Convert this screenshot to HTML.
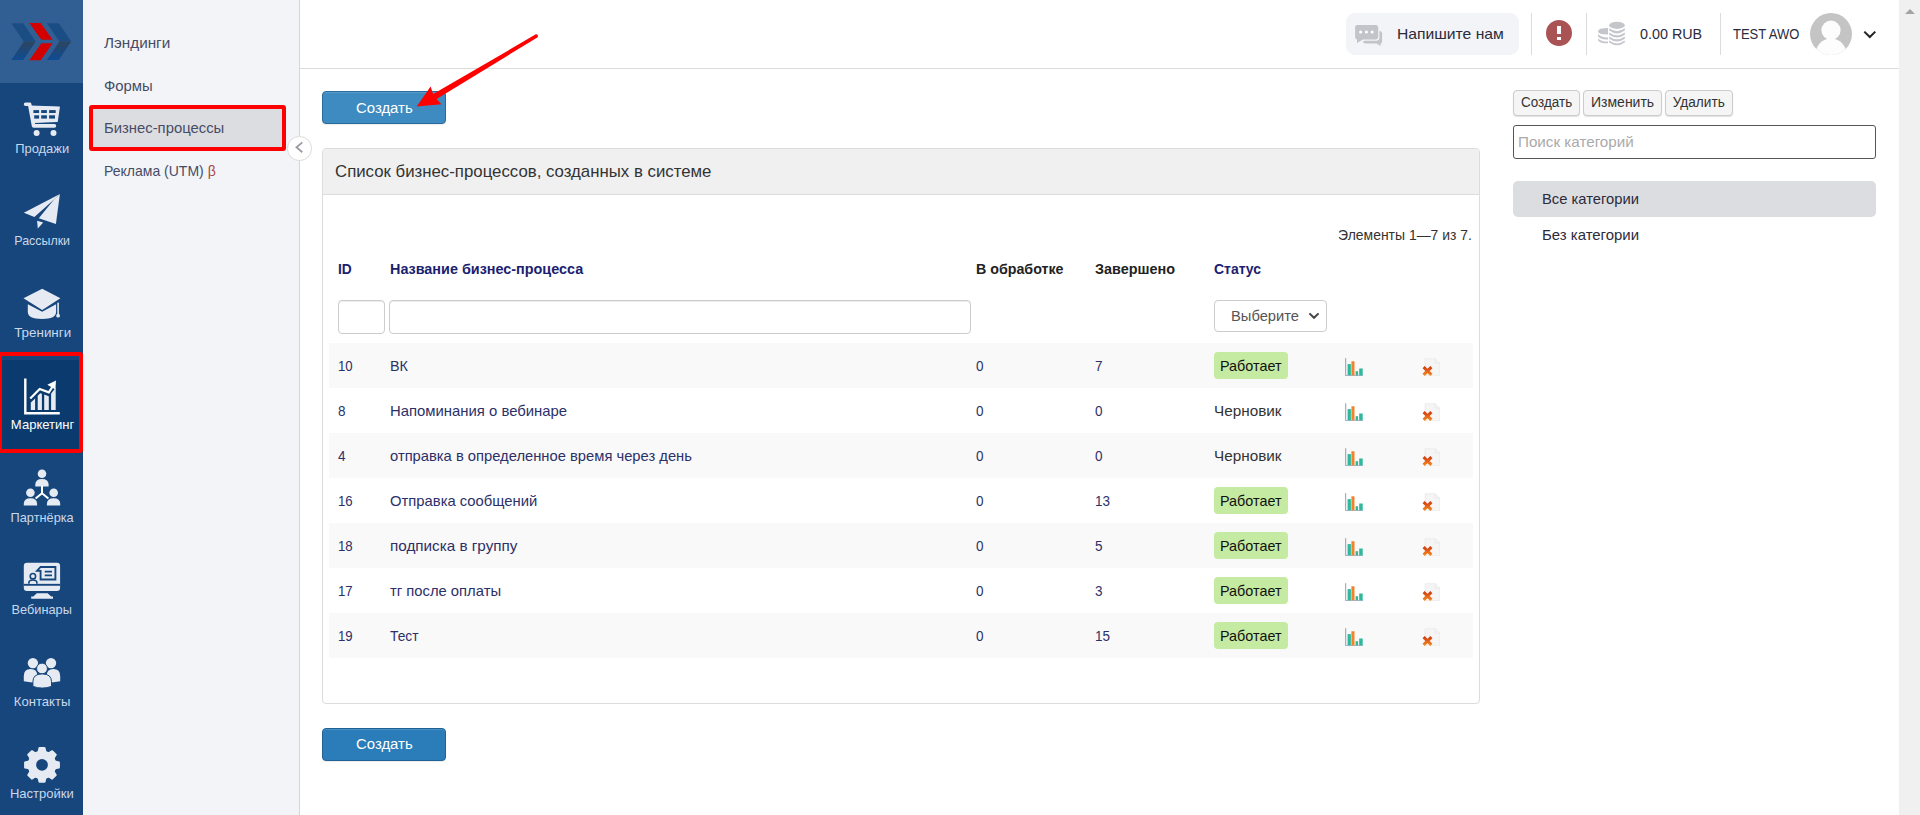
<!DOCTYPE html>
<html lang="ru">
<head>
<meta charset="utf-8">
<title>Бизнес-процессы</title>
<style>
*{box-sizing:border-box}
html,body{margin:0;padding:0}
body{width:1920px;height:815px;overflow:hidden;position:relative;background:#fff;
  font-family:"Liberation Sans",sans-serif;font-size:15px;color:#333;line-height:1}
.t{display:inline-block;white-space:nowrap;transform:scaleX(var(--s,1));transform-origin:0 50%}
.tc{transform-origin:50% 50%}
.tr{transform-origin:100% 50%}

/* ---------- left icon sidebar ---------- */
#side{position:absolute;left:0;top:0;width:83px;height:815px;background:#16467c;overflow:hidden}
#logo{position:absolute;left:0;top:0;width:83px;height:83px;background:#325f93}
#logo svg{position:absolute;left:0;top:0}
.nav{position:absolute;left:0;width:83px;height:92px;color:#c9d8ec;font-size:13px;text-align:center}
.nav svg{position:absolute;left:0;top:0;width:83px;height:92px;overflow:visible}
.nav .lb{position:absolute;left:0;right:-1.4px;top:59px;line-height:14px}
.nav.on{color:#fff}
.nav.on:before{content:"";position:absolute;left:0;right:0;top:1px;height:92px;background:#0b3a6e}

/* ---------- sub menu ---------- */
#sub{position:absolute;left:83px;top:0;width:217px;height:815px;background:#f3f4f7;border-right:1px solid #d6d6d6}
#sub a{position:absolute;left:7px;width:195px;height:44px;padding:0 0 0 13.7px;line-height:43.2px;color:#474c66;text-decoration:none;border-radius:3px}
#sub a.on{background:#dcdde1}
#sub .beta{color:#a94442}
#fold{position:absolute;left:287.3px;top:136.2px;width:24.4px;height:24.4px;border-radius:50%;background:#fff;border:1px solid #dcdcdc}

/* ---------- header ---------- */
#head{position:absolute;left:300px;top:0;width:1599px;height:69px;border-bottom:1px solid #dcdcdc;background:#fff}
#head .sep{position:absolute;top:13px;width:1px;height:42px;background:#dcdcdc}
#write{position:absolute;left:1046px;top:13px;width:173px;height:42px;border-radius:9px;background:#f3f4f7;color:#2b2b3b}
#head .txt{position:absolute;top:25.6px;line-height:16px;color:#2b2b3b}

/* ---------- scrollbar ---------- */
#sb{position:absolute;left:1899px;top:0;width:21px;height:815px;background:#f0f0f0}
#sb:before{content:"";position:absolute;left:5.7px;top:9px;border:5px solid transparent;border-top:0;border-bottom:5px solid #a3a3a3}

/* ---------- content ---------- */
.btnp{position:absolute;left:322px;width:124px;height:33px;border-radius:4px;color:#fff;font-size:15.45px;text-align:center;line-height:30px;border:1px solid #2b6a9c;background:#3d8bc1;box-shadow:inset 0 1px 0 rgba(255,255,255,.15),0 1px 1px rgba(0,0,0,.075)}
#panel{position:absolute;left:322px;top:148px;width:1158px;height:556px;border:1px solid #dcdcdc;border-radius:4px;background:#fff}
#ph{height:46px;background:#f0f0f0;border-bottom:1px solid #dcdcdc;border-radius:3px 3px 0 0;font-size:17px;color:#333;padding:13px 0 0 11.5px;line-height:20px}

/* header bits */
#head svg{position:absolute;overflow:visible}
#alert{position:absolute;left:1245.9px;top:19.7px;width:26.2px;height:26.2px;border-radius:50%;background:#a95355}
#alert:before{content:"";position:absolute;left:11.2px;top:6.2px;width:3.8px;height:8.5px;background:#fff}
#alert:after{content:"";position:absolute;left:11.2px;top:17.1px;width:3.8px;height:3.2px;background:#fff}

/* table */
#sum{position:absolute;right:7px;top:72px;line-height:27px;color:#333}
#grid{position:absolute;left:6px;top:97px;width:1144px;border-collapse:collapse;table-layout:fixed;line-height:27px}
#grid th{height:45px;padding:9px 0 9px 9.2px;text-align:left;font-weight:700;color:#222;white-space:nowrap;overflow:visible}
#grid th.l{color:#1a2170}
#grid td{height:45px;padding:9px 0 9px 9.2px;color:#2c3068;white-space:nowrap;overflow:visible;vertical-align:top}
#grid tr.f td{height:52px;padding:0;position:relative}
#grid tr.o td{background:#f9f9f9}
#grid td.st{color:#333}
.inp{position:absolute;top:9px;height:34px;border:1px solid #ccc;border-radius:4px;background:#fff;box-shadow:inset 0 1px 1px rgba(0,0,0,.075)}
.sel{position:absolute;left:9px;top:9px;width:113px;height:32px;border:1px solid #ccc;border-radius:4px;background:#fff;color:#555;line-height:30px;padding-left:16px}
.bdg{display:inline-block;width:73.5px;height:26.6px;line-height:28px;margin:0 0 0 -.2px;padding:0 0 0 6px;background:#c5eaa2;color:#111;border-radius:4px;vertical-align:top}
.ic{display:block;width:18.4px;height:18.4px;margin:5.5px 0 0 .7px}

/* right column */
.bs{position:absolute;top:90px;height:26px;border:1px solid #ccc;border-radius:4px;background:#f5f5f5;color:#333;font-size:14px;line-height:23px;text-align:center;box-shadow:0 1px 1px rgba(0,0,0,.12)}
#q{position:absolute;left:1513px;top:125px;width:363px;height:34px;border:1px solid #555;border-radius:3px;background:#fff;color:#aaa;line-height:32px;padding-left:4px}
.cat{position:absolute;left:1513px;width:363px;height:36px;border-radius:5px;line-height:35px;padding-left:29px;color:#2b2b3b}
.cat.on{background:#dcdde1}

/* annotations */
.redbox{position:absolute;border:4px solid #f00;border-radius:3px}
#arrow{position:absolute;left:0;top:0;pointer-events:none}
</style>
</head>
<body>

<div id="side">
  <div id="logo">
    <svg width="83" height="83" viewBox="0 0 83 83">
      <defs>
        <linearGradient id="lg" x1="0" y1="0" x2="0" y2="1"><stop offset="0" stop-color="#2c4560"/><stop offset="1" stop-color="#0f4c93"/></linearGradient>
      </defs>
      <polygon points="11.3,23.2 23.2,23.2 35.7,41.5 23.8,41.5" fill="#1b4d85"/>
      <polygon points="23.8,41.5 35.7,41.5 23.2,60.1 11.3,60.1" fill="url(#lg)"/>
      <polygon points="46.9,23.2 58.8,23.2 71.3,41.5 59.4,41.5" fill="#1b4d85"/>
      <polygon points="59.4,41.5 71.3,41.5 58.8,60.1 46.9,60.1" fill="url(#lg)"/>
      <polygon points="29.4,22.9 40.7,22.9 52.6,39.8 41.3,39.8" fill="#d40000"/>
      <polygon points="41.3,43.2 52.6,43.2 40.7,60.3 29.4,60.3" fill="#d40000"/>
    </svg>
  </div>

  <div class="nav" style="top:83px">
    <svg viewBox="0 0 83 92" style="transform:translateY(0px)">
      <path d="M25.6,21.2 H29.6 L33.6,42.9 H54.4" fill="none" stroke="#e6ebf3" stroke-width="3.6" stroke-linecap="round" stroke-linejoin="round"/>
      <polygon points="30.2,23.2 59.3,24.0 57.2,38.4 33.0,39.4" fill="#e6ebf3" stroke="#e6ebf3" stroke-width="1.2" stroke-linejoin="round"/>
      <g fill="#16467c">
        <rect x="33.4" y="27.1" width="5.7" height="2.9"/><rect x="41.2" y="27.1" width="5.7" height="2.9"/><rect x="49.1" y="27.1" width="6.6" height="2.9"/>
        <rect x="34.2" y="32.3" width="4.9" height="3.3"/><rect x="41.2" y="32.3" width="5.7" height="3.3"/><rect x="49.1" y="32.3" width="5.9" height="3.3"/>
      </g>
      <circle cx="36.6" cy="49.9" r="3" fill="#e6ebf3"/><circle cx="53.5" cy="49.9" r="3" fill="#e6ebf3"/>
    </svg>
    <div class="lb"><span class="t tc" style="--s:.995">Продажи</span></div>
  </div>

  <div class="nav" style="top:175px">
    <svg viewBox="0 0 83 92" style="transform:translateY(0.13px)" fill="#e6ebf3">
      <polygon points="23.85,37.55 59.9,18.8 53.8,24.5 34.35,41.97"/>
      <polygon points="53.8,24.5 59.9,18.8 55.9,48.8 38.8,43.1"/>
      <polygon points="37.1,45.6 43.2,47.3 37.8,53.4"/>
    </svg>
    <div class="lb"><span class="t tc" style="--s:.955">Рассылки</span></div>
  </div>

  <div class="nav" style="top:267px">
    <svg viewBox="0 0 83 92" style="transform:translateY(0.26px)" fill="#e6ebf3">
      <polygon points="42.2,21.4 60.4,31 42.2,42.7 23.5,31"/>
      <path d="M27.8,37.1 L42.2,44.6 L56.1,37 V44.5 Q56.1,51.7 42.2,51.7 Q27.8,51.7 27.8,44.5 Z"/>
      <rect x="57.3" y="35.4" width="1.6" height="12.6"/><circle cx="58.1" cy="48.4" r="1.9"/>
    </svg>
    <div class="lb"><span class="t tc" style="--s:1.03">Тренинги</span></div>
  </div>

  <div class="nav on" style="top:359px">
    <svg viewBox="0 0 83 92" style="transform:translateY(0.8px)">
      <path d="M25.3,18.6 V53.5 H59.8" fill="none" stroke="#fff" stroke-width="2.4"/>
      <g fill="#e6ebf3">
        <polygon points="30.8,42.8 35.1,38.6 35.1,50.2 30.8,50.2"/>
        <polygon points="37.7,36 40.3,33.4 41.9,34 41.9,50.2 37.7,50.2"/>
        <polygon points="44.2,34.8 48.8,36.4 48.8,50.2 44.2,50.2"/>
        <polygon points="51.1,33.6 55.7,28 55.7,50.2 51.1,50.2"/>
      </g>
      <polyline points="30.2,38.7 39.7,29.2 48.8,32.5 53.3,25.7" fill="none" stroke="#fff" stroke-width="2.2" stroke-linejoin="miter"/>
      <polygon points="56,20.6 47.3,24.9 55.4,29.8" fill="#fff"/>
    </svg>
    <div class="lb"><span class="t tc" style="--s:1.004">Маркетинг</span></div>
  </div>

  <div class="nav" style="top:452px">
    <svg viewBox="0 0 83 92" style="transform:translateY(-1.0px)" fill="#e6ebf3">
      <circle cx="42" cy="22.8" r="4.3"/><path d="M35.3,35.4 V33.6 Q35.3,28 42,28 Q48.6,28 48.6,33.6 V35.4 Z"/>
      <circle cx="30.4" cy="41.8" r="4.3"/><path d="M23.8,54.5 V52.8 Q23.8,47.2 30.4,47.2 Q37.1,47.2 37.1,52.8 V54.5 Z"/>
      <circle cx="53.7" cy="41.8" r="4.3"/><path d="M46.9,54.5 V52.8 Q46.9,47.2 53.6,47.2 Q60.2,47.2 60.2,52.8 V54.5 Z"/>
      <path d="M42,35 V42.3 M35.6,47.6 L42,42.3 L48.4,47.6" fill="none" stroke="#fff" stroke-width="2"/>
    </svg>
    <div class="lb"><span class="t tc" style="--s:.981">Партнёрка</span></div>
  </div>

  <div class="nav" style="top:544px">
    <svg viewBox="0 0 83 92" style="transform:translateY(-0.35px)">
      <rect x="23.8" y="19.1" width="36.3" height="28.2" rx="3.2" fill="#e6ebf3"/>
      <rect x="23.8" y="40.2" width="36.3" height="1.9" fill="#16467c"/>
      <polygon points="36.8,49.5 47.6,49.5 51.2,52.9 53,52.9 53,55 31.2,55 31.2,52.9 33.4,52.9" fill="#e6ebf3"/>
      <path d="M37,27.2 L40.6,23.3 H55.4 V35.8 H40.6 V27.2 Z" fill="none" stroke="#16467c" stroke-width="1.9" stroke-linejoin="miter"/>
      <path d="M44.7,27.9 H52 M44.7,31.8 H52" stroke="#16467c" stroke-width="1.7" fill="none"/>
      <circle cx="32.9" cy="32.5" r="2.7" fill="#e6ebf3" stroke="#16467c" stroke-width="1.6"/>
      <path d="M28.9,40.2 V39 Q28.9,36.3 32.9,36.3 Q36.9,36.3 36.9,39 V40.2" fill="#e6ebf3" stroke="#16467c" stroke-width="1.6"/>
    </svg>
    <div class="lb"><span class="t tc" style="--s:.981">Вебинары</span></div>
  </div>

  <div class="nav" style="top:636px">
    <svg viewBox="0 0 83 92" style="transform:translateY(-0.22px)" fill="#e6ebf3">
      <circle cx="32.9" cy="27.3" r="5.2"/><circle cx="51" cy="27.3" r="5.2"/>
      <path d="M23.8,45.5 V40.5 Q23.8,33.2 30.6,33.2 Q37.4,33.2 37.4,40.5 V46.9 Q30,46.9 23.8,45.5 Z"/>
      <path d="M60.2,45.5 V40.5 Q60.2,33.2 53.4,33.2 Q46.6,33.2 46.6,40.5 V46.9 Q54,46.9 60.2,45.5 Z"/>
      <circle cx="42" cy="32.7" r="5.4" stroke="#16467c" stroke-width="1"/>
      <path d="M32.9,50.6 V46 Q32.9,38.1 42.2,38.1 Q51.5,38.1 51.5,46 V50.6 Q42.2,54 32.9,50.6 Z" stroke="#16467c" stroke-width="1"/>
    </svg>
    <div class="lb"><span class="t tc" style="--s:1.006">Контакты</span></div>
  </div>

  <div class="nav" style="top:728px">
    <svg viewBox="0 0 83 92" style="transform:translateY(-0.09px)" fill="#e6ebf3">
      <path d="M38.56,24.15 L39.47,20.09 L44.53,20.09 L45.44,24.15 L48.65,25.48 L52.17,23.25 L55.75,26.83 L53.52,30.35 L54.85,33.56 L58.91,34.47 L58.91,39.53 L54.85,40.44 L53.52,43.65 L55.75,47.17 L52.17,50.75 L48.65,48.52 L45.44,49.85 L44.53,53.91 L39.47,53.91 L38.56,49.85 L35.35,48.52 L31.83,50.75 L28.25,47.17 L30.48,43.65 L29.15,40.44 L25.09,39.53 L25.09,34.47 L29.15,33.56 L30.48,30.35 L28.25,26.83 L31.83,23.25 L35.35,25.48Z" stroke="#e6ebf3" stroke-width="2" stroke-linejoin="round"/>
      <circle cx="42" cy="37" r="14.1"/>
      <circle cx="42" cy="37" r="5.9" fill="#16467c"/>
    </svg>
    <div class="lb"><span class="t tc" style="--s:1.002">Настройки</span></div>
  </div>
</div>

<div id="sub">
  <a style="top:21px"><span class="t" style="--s:1.018">Лэндинги</span></a>
  <a style="top:64px"><span class="t" style="--s:.991">Формы</span></a>
  <a class="on" style="top:106px"><span class="t" style="--s:.989">Бизнес-процессы</span></a>
  <a style="top:149px"><span class="t" style="--s:.934">Реклама (UTM) <span class="beta">β</span></span></a>
</div>
<div id="fold"><svg width="24" height="24" viewBox="0 0 24 24" style="position:absolute;left:-1px;top:-1px"><path d="M15.3,6.4 L9.5,11.3 L15.3,16.2" fill="none" stroke="#9a9aa0" stroke-width="1.8"/></svg></div>

<div id="head">
  <div id="write">
    <svg width="30" height="24" style="left:8px;top:11px" viewBox="0 0 30 24" fill="#c3c4ca">
      <path d="M3.4,0.9 H21.8 Q24.2,0.9 24.2,3.3 V13.1 Q24.2,15.5 21.8,15.5 H9 L3,19 V15.5 Q1.1,15.5 1.1,13.1 V3.3 Q1.1,0.9 3.4,0.9 Z"/>
      <path d="M25.4,6.9 Q28.1,6.9 28.1,9.4 V17 Q28.1,19.5 26.6,19.5 V21.9 L22.5,19.5 H11.5 Q9.2,19.5 8.9,17.6 L10.5,16.8 H22.2 Q25.4,16.8 25.4,13.5 Z"/>
      <circle cx="6.6" cy="7.9" r="1.5" fill="#fff"/><circle cx="12.4" cy="7.9" r="1.5" fill="#fff"/><circle cx="18.1" cy="7.9" r="1.5" fill="#fff"/>
    </svg>
    <span class="txt" style="left:50.6px;top:12.5px"><span class="t" style="--s:1.045">Напишите нам</span></span>
  </div>
  <div class="sep" style="left:1231px"></div>
  <div id="alert"></div>
  <div class="sep" style="left:1286px"></div>
  <svg width="30" height="26" style="left:1297px;top:21px" viewBox="0 0 30 26" fill="#c4c6cb">
    <ellipse cx="20" cy="4.3" rx="7.8" ry="3.6"/>
    <path d="M12.2,7.3 Q20,13 27.8,7.3 V9.6 Q20,15.2 12.2,9.6 Z"/>
    <path d="M12.2,11.4 Q20,17.1 27.8,11.4 V13.7 Q20,19.3 12.2,13.7 Z"/>
    <path d="M12.2,15.5 Q20,21.2 27.8,15.5 V17.8 Q20,23.4 12.2,17.8 Z"/>
    <path d="M12.2,19.6 Q20,25.3 27.8,19.6 V21.6 Q20,27 12.2,21.6 Z"/>
    <path d="M11,6.9 Q1,6.9 1,10.3 Q1,13.6 11,13.6 Z"/>
    <path d="M1,13.3 Q4,16.6 11,16.4 V18.4 Q4,18.8 1,15.4 Z"/>
    <path d="M1,17.4 Q4,20.7 11,20.5 V22.3 Q4,22.7 1,19.4 Z"/>
  </svg>
  <span class="txt" style="left:1339.6px"><span class="t" style="--s:.956">0.00 RUB</span></span>
  <div class="sep" style="left:1420px"></div>
  <span class="txt" style="left:1432.6px"><span class="t" style="--s:.866">TEST AWO</span></span>
  <svg width="42" height="42" style="left:1510.4px;top:13px" viewBox="0 0 42 42">
    <defs><clipPath id="av"><circle cx="21" cy="21" r="21"/></clipPath></defs>
    <circle cx="21" cy="21" r="21" fill="#c4c4c4"/>
    <g clip-path="url(#av)" fill="#fdfdfd"><circle cx="21" cy="17.2" r="9.6"/><ellipse cx="21" cy="43" rx="16" ry="17.6"/></g>
  </svg>
  <svg width="14" height="9" style="left:1563.4px;top:29.5px" viewBox="0 0 14 9"><path d="M1.3,1.6 L6.8,7 L12.3,1.6" fill="none" stroke="#222" stroke-width="2"/></svg>
</div>
<div id="sb"></div>

<div class="btnp" style="top:91px;line-height:31.6px"><span class="t tc" style="--s:.965">Создать</span></div>
<div id="panel">
  <div id="ph"><span class="t" style="--s:.988">Список бизнес-процессов, созданных в системе</span></div>
  <div id="sum"><span class="t tr" style="--s:.93">Элементы 1—7 из 7.</span></div>
  <table id="grid">
    <colgroup><col style="width:52px"><col style="width:586px"><col style="width:119px"><col style="width:119px"><col style="width:130px"><col style="width:77px"><col style="width:61px"></colgroup>
    <thead>
      <tr><th class="l"><span class="t" style="--s:.917">ID</span></th><th class="l"><span class="t" style="--s:.959">Название бизнес-процесса</span></th><th><span class="t" style="--s:.949">В обработке</span></th><th><span class="t" style="--s:.96">Завершено</span></th><th class="l"><span class="t" style="--s:.93">Статус</span></th><th></th><th></th></tr>
      <tr class="f"><td><div class="inp" style="left:9px;width:47px"></div></td><td><div class="inp" style="left:8px;width:582px"></div></td><td></td><td></td><td><div class="sel"><span class="t" style="--s:.981">Выберите</span><svg width="12" height="8" viewBox="0 0 12 8" style="position:absolute;left:93.3px;top:11.3px"><path d="M1.4,1.4 L6,5.8 L10.6,1.4" fill="none" stroke="#444" stroke-width="2"/></svg></div></td><td></td><td></td></tr>
    </thead>
    <tbody>
      <tr class="o"><td><span class="t" style="--s:.881">10</span></td><td><span class="t" style="--s:.96">ВК</span></td><td><span class="t" style="--s:.9">0</span></td><td><span class="t" style="--s:.9">7</span></td><td><span class="bdg"><span class="t" style="--s:.958">Работает</span></span></td><td><svg class="ic" viewBox="0 0 18.4 18.4"><path d="M0.7,0.2 V17.8 H18.4" fill="none" stroke="#8a8fb8" stroke-width=".9"/><rect x="2.6" y="6.1" width="3.3" height="11.3" fill="#2fb89a"/><rect x="6.4" y="3.3" width="3.1" height="14.1" fill="#f0832c"/><rect x="10.6" y="13.2" width="2.5" height="4.2" fill="#2fb89a"/><rect x="14.2" y="10.5" width="3.5" height="6.9" fill="#2fb89a"/></svg></td><td><svg class="ic" viewBox="0 0 18.4 18.4"><path d="M3.2,0.7 H13.2 L17.8,5.2 V17.9 H3.2 Z" fill="#f5f5f5" stroke="#e8e8e8" stroke-width=".8"/><path d="M13.2,0.7 V5.2 H17.8" fill="none" stroke="#e8e8e8" stroke-width=".8"/><path d="M1.6,9.1 L9.4,16.9 M9.4,9.1 L1.6,16.9" stroke="url(#xg)" stroke-width="3" stroke-linecap="butt"/></svg></td></tr>
      <tr><td><span class="t" style="--s:.9">8</span></td><td><span class="t" style="--s:.991">Напоминания о вебинаре</span></td><td><span class="t" style="--s:.9">0</span></td><td><span class="t" style="--s:.9">0</span></td><td class="st"><span class="t" style="--s:1.019">Черновик</span></td><td><svg class="ic" viewBox="0 0 18.4 18.4"><path d="M0.7,0.2 V17.8 H18.4" fill="none" stroke="#8a8fb8" stroke-width=".9"/><rect x="2.6" y="6.1" width="3.3" height="11.3" fill="#2fb89a"/><rect x="6.4" y="3.3" width="3.1" height="14.1" fill="#f0832c"/><rect x="10.6" y="13.2" width="2.5" height="4.2" fill="#2fb89a"/><rect x="14.2" y="10.5" width="3.5" height="6.9" fill="#2fb89a"/></svg></td><td><svg class="ic" viewBox="0 0 18.4 18.4"><path d="M3.2,0.7 H13.2 L17.8,5.2 V17.9 H3.2 Z" fill="#f5f5f5" stroke="#e8e8e8" stroke-width=".8"/><path d="M13.2,0.7 V5.2 H17.8" fill="none" stroke="#e8e8e8" stroke-width=".8"/><path d="M1.6,9.1 L9.4,16.9 M9.4,9.1 L1.6,16.9" stroke="url(#xg)" stroke-width="3" stroke-linecap="butt"/></svg></td></tr>
      <tr class="o"><td><span class="t" style="--s:.9">4</span></td><td><span class="t" style="--s:.983">отправка в определенное время через день</span></td><td><span class="t" style="--s:.9">0</span></td><td><span class="t" style="--s:.9">0</span></td><td class="st"><span class="t" style="--s:1.019">Черновик</span></td><td><svg class="ic" viewBox="0 0 18.4 18.4"><path d="M0.7,0.2 V17.8 H18.4" fill="none" stroke="#8a8fb8" stroke-width=".9"/><rect x="2.6" y="6.1" width="3.3" height="11.3" fill="#2fb89a"/><rect x="6.4" y="3.3" width="3.1" height="14.1" fill="#f0832c"/><rect x="10.6" y="13.2" width="2.5" height="4.2" fill="#2fb89a"/><rect x="14.2" y="10.5" width="3.5" height="6.9" fill="#2fb89a"/></svg></td><td><svg class="ic" viewBox="0 0 18.4 18.4"><path d="M3.2,0.7 H13.2 L17.8,5.2 V17.9 H3.2 Z" fill="#f5f5f5" stroke="#e8e8e8" stroke-width=".8"/><path d="M13.2,0.7 V5.2 H17.8" fill="none" stroke="#e8e8e8" stroke-width=".8"/><path d="M1.6,9.1 L9.4,16.9 M9.4,9.1 L1.6,16.9" stroke="url(#xg)" stroke-width="3" stroke-linecap="butt"/></svg></td></tr>
      <tr><td><span class="t" style="--s:.881">16</span></td><td><span class="t" style="--s:.987">Отправка сообщений</span></td><td><span class="t" style="--s:.9">0</span></td><td><span class="t" style="--s:.9">13</span></td><td><span class="bdg"><span class="t" style="--s:.958">Работает</span></span></td><td><svg class="ic" viewBox="0 0 18.4 18.4"><path d="M0.7,0.2 V17.8 H18.4" fill="none" stroke="#8a8fb8" stroke-width=".9"/><rect x="2.6" y="6.1" width="3.3" height="11.3" fill="#2fb89a"/><rect x="6.4" y="3.3" width="3.1" height="14.1" fill="#f0832c"/><rect x="10.6" y="13.2" width="2.5" height="4.2" fill="#2fb89a"/><rect x="14.2" y="10.5" width="3.5" height="6.9" fill="#2fb89a"/></svg></td><td><svg class="ic" viewBox="0 0 18.4 18.4"><path d="M3.2,0.7 H13.2 L17.8,5.2 V17.9 H3.2 Z" fill="#f5f5f5" stroke="#e8e8e8" stroke-width=".8"/><path d="M13.2,0.7 V5.2 H17.8" fill="none" stroke="#e8e8e8" stroke-width=".8"/><path d="M1.6,9.1 L9.4,16.9 M9.4,9.1 L1.6,16.9" stroke="url(#xg)" stroke-width="3" stroke-linecap="butt"/></svg></td></tr>
      <tr class="o"><td><span class="t" style="--s:.881">18</span></td><td><span class="t" style="--s:1.017">подписка в группу</span></td><td><span class="t" style="--s:.9">0</span></td><td><span class="t" style="--s:.9">5</span></td><td><span class="bdg"><span class="t" style="--s:.958">Работает</span></span></td><td><svg class="ic" viewBox="0 0 18.4 18.4"><path d="M0.7,0.2 V17.8 H18.4" fill="none" stroke="#8a8fb8" stroke-width=".9"/><rect x="2.6" y="6.1" width="3.3" height="11.3" fill="#2fb89a"/><rect x="6.4" y="3.3" width="3.1" height="14.1" fill="#f0832c"/><rect x="10.6" y="13.2" width="2.5" height="4.2" fill="#2fb89a"/><rect x="14.2" y="10.5" width="3.5" height="6.9" fill="#2fb89a"/></svg></td><td><svg class="ic" viewBox="0 0 18.4 18.4"><path d="M3.2,0.7 H13.2 L17.8,5.2 V17.9 H3.2 Z" fill="#f5f5f5" stroke="#e8e8e8" stroke-width=".8"/><path d="M13.2,0.7 V5.2 H17.8" fill="none" stroke="#e8e8e8" stroke-width=".8"/><path d="M1.6,9.1 L9.4,16.9 M9.4,9.1 L1.6,16.9" stroke="url(#xg)" stroke-width="3" stroke-linecap="butt"/></svg></td></tr>
      <tr><td><span class="t" style="--s:.881">17</span></td><td><span class="t" style="--s:.986">тг после оплаты</span></td><td><span class="t" style="--s:.9">0</span></td><td><span class="t" style="--s:.9">3</span></td><td><span class="bdg"><span class="t" style="--s:.958">Работает</span></span></td><td><svg class="ic" viewBox="0 0 18.4 18.4"><path d="M0.7,0.2 V17.8 H18.4" fill="none" stroke="#8a8fb8" stroke-width=".9"/><rect x="2.6" y="6.1" width="3.3" height="11.3" fill="#2fb89a"/><rect x="6.4" y="3.3" width="3.1" height="14.1" fill="#f0832c"/><rect x="10.6" y="13.2" width="2.5" height="4.2" fill="#2fb89a"/><rect x="14.2" y="10.5" width="3.5" height="6.9" fill="#2fb89a"/></svg></td><td><svg class="ic" viewBox="0 0 18.4 18.4"><path d="M3.2,0.7 H13.2 L17.8,5.2 V17.9 H3.2 Z" fill="#f5f5f5" stroke="#e8e8e8" stroke-width=".8"/><path d="M13.2,0.7 V5.2 H17.8" fill="none" stroke="#e8e8e8" stroke-width=".8"/><path d="M1.6,9.1 L9.4,16.9 M9.4,9.1 L1.6,16.9" stroke="url(#xg)" stroke-width="3" stroke-linecap="butt"/></svg></td></tr>
      <tr class="o"><td><span class="t" style="--s:.881">19</span></td><td><span class="t" style="--s:.918">Тест</span></td><td><span class="t" style="--s:.9">0</span></td><td><span class="t" style="--s:.9">15</span></td><td><span class="bdg"><span class="t" style="--s:.958">Работает</span></span></td><td><svg class="ic" viewBox="0 0 18.4 18.4"><path d="M0.7,0.2 V17.8 H18.4" fill="none" stroke="#8a8fb8" stroke-width=".9"/><rect x="2.6" y="6.1" width="3.3" height="11.3" fill="#2fb89a"/><rect x="6.4" y="3.3" width="3.1" height="14.1" fill="#f0832c"/><rect x="10.6" y="13.2" width="2.5" height="4.2" fill="#2fb89a"/><rect x="14.2" y="10.5" width="3.5" height="6.9" fill="#2fb89a"/></svg></td><td><svg class="ic" viewBox="0 0 18.4 18.4"><path d="M3.2,0.7 H13.2 L17.8,5.2 V17.9 H3.2 Z" fill="#f5f5f5" stroke="#e8e8e8" stroke-width=".8"/><path d="M13.2,0.7 V5.2 H17.8" fill="none" stroke="#e8e8e8" stroke-width=".8"/><path d="M1.6,9.1 L9.4,16.9 M9.4,9.1 L1.6,16.9" stroke="url(#xg)" stroke-width="3" stroke-linecap="butt"/></svg></td></tr>
    </tbody>
  </table>
</div>
<div class="btnp" style="top:728px;background:#2b7dba;border-color:#1f6296"><span class="t tc" style="--s:.965">Создать</span></div>

<div class="bs" style="left:1513px;width:67px"><span class="t tc" style="--s:.96">Создать</span></div>
<div class="bs" style="left:1583px;width:79px"><span class="t tc" style="--s:.998">Изменить</span></div>
<div class="bs" style="left:1665px;width:68px"><span class="t tc" style="--s:.973">Удалить</span></div>
<div id="q"><span class="t" style="--s:1.013">Поиск категорий</span></div>
<div class="cat on" style="top:181px"><span class="t" style="--s:.984">Все категории</span></div>
<div class="cat" style="top:217px"><span class="t" style="--s:.996">Без категории</span></div>

<div class="redbox" style="left:89.1px;top:104.9px;width:196.8px;height:46px"></div>
<div class="redbox" style="left:-1.7px;top:352px;width:85px;height:100.8px"></div>
<svg id="arrow" width="1920" height="815" viewBox="0 0 1920 815">
  <defs><linearGradient id="xg" gradientUnits="userSpaceOnUse" x1="0" y1="8" x2="0" y2="17.5"><stop offset="0" stop-color="#cf3510"/><stop offset="1" stop-color="#f28a22"/></linearGradient></defs>
  <polygon points="535.4,34.6 537.3,37.4 435.8,99.6 432.3,94.6" fill="#f00"/>
  <circle cx="536.3" cy="36" r="1.7" fill="#f00"/>
  <polygon points="416.7,106.4 430.6,86.4 433.2,94.2 436.4,98.8 441.4,104.3" fill="#f00"/>
</svg>

</body>
</html>
